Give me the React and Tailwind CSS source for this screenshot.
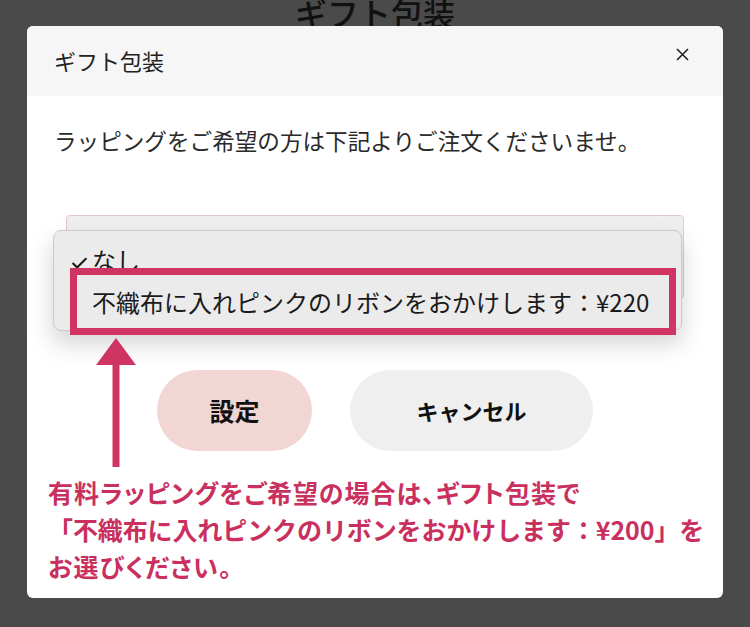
import { Check } from "lucide-react";

const jp = { fontFamily: '"Noto Sans CJK JP", "Noto Sans", sans-serif' };

const App = () => {
    return (
        <div className="relative h-[627px] w-[750px] overflow-hidden bg-[#4a4a4a]" style={jp}>
            {/* page behind the dialog */}
            <h1 className="-mt-[5px] text-center text-[32px] leading-[34px] font-medium text-[#111]">ギフト包装</h1>

            {/* Dialog */}
            <div className="absolute left-[27px] top-[26px] flex h-[572px] w-[696px] flex-col overflow-hidden rounded-[6px] bg-white">
                {/* Header */}
                <div className="flex h-[70px] shrink-0 items-center justify-between bg-[#f6f6f6] pl-[27px] pr-[34px]">
                    <h2 className="-mt-[2px] text-[22px] leading-none text-[#222]">ギフト包装</h2>
                    <svg width="13" height="13" viewBox="0 0 13 13" className="-mt-[14px] text-[#222]">
                        <path d="M1 1 L12 12 M12 1 L1 12" stroke="currentColor" strokeWidth="1.6" />
                    </svg>
                </div>

                {/* Body */}
                <div className="flex flex-1 flex-col px-[27px]">
                    <p className="mt-[29px] whitespace-nowrap text-[22.6px] leading-[32px] text-[#2a2a2a]">
                        ラッピングをご希望の方は下記よりご注文くださいませ。
                    </p>

                    {/* Select with open menu */}
                    <div className="relative mx-[12px] mt-[58px] h-[84px] rounded-[4px] border border-[#e3c9ce] bg-[#efefef]">
                        <div className="absolute -left-[14px] top-[14px] h-[101px] w-[629px] rounded-[8px] border border-[#c9c9c9] bg-[#ebebeb] shadow-[0_12px_24px_rgba(0,0,0,0.18)]">
                            <div className="absolute left-[16px] top-[13px] flex items-center text-[24px] leading-[32px] text-[#1a1a1a]">
                                <Check className="mr-[3px] mt-[6px] h-[19px] w-[19px]" strokeWidth={2.6} />
                                <span>なし</span>
                            </div>
                            <div className="absolute left-[38px] top-[55px] text-[24px] leading-[32px] text-[#1a1a1a]">
                                不織布に入れピンクのリボンをおかけします：¥220
                            </div>
                        </div>

                        {/* Annotation highlight */}
                        <div className="absolute left-[3px] top-[52px] h-[67px] w-[606px] border-[7px] border-[#cf3462]" />

                        {/* Annotation arrow */}
                        <svg width="40" height="129" viewBox="0 0 40 129" className="absolute left-[29px] top-[122px]">
                            <polygon points="20,0 40,27 0,27" fill="#cf3462" />
                            <rect x="16.5" y="26" width="7" height="103" fill="#cf3462" />
                        </svg>
                    </div>

                    {/* Buttons */}
                    <div className="mt-[71px] flex justify-center gap-[38px]">
                        <button className="h-[81px] w-[155px] rounded-full bg-[#f2d6d3] text-[25px] font-bold text-[#111]">
                            設定
                        </button>
                        <button className="h-[81px] w-[243px] rounded-full bg-[#efefef] text-[22px] font-bold text-[#111]">
                            キャンセル
                        </button>
                    </div>

                    {/* Annotation text */}
                    <div className="-ml-[6px] -mr-[20px] mt-[23px] whitespace-nowrap text-[25px] leading-[37px] font-bold text-[#c9305e]">
                        <p className="[font-feature-settings:'palt'] tracking-[1px]">有料ラッピングをご希望の場合は、ギフト包装で</p>
                        <p className="tracking-[-0.1px]">「不織布に入れピンクのリボンをおかけします：¥200」を</p>
                        <p className="[font-feature-settings:'palt'] tracking-[1.2px]">お選びください。</p>
                    </div>
                </div>
            </div>
        </div>
    );
};

export default App;
